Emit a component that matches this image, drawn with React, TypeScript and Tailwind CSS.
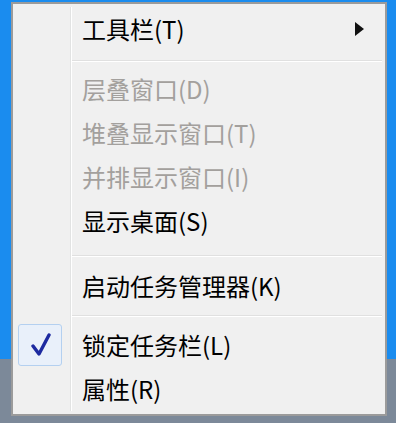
import React from "react";

// ── Menu pieces ──────────────────────────────────────────────────────────────

type Item = {
  label: string;
  disabled?: boolean;
  checked?: boolean;
  submenu?: boolean;
};

function CheckMark() {
  return (
    <svg width="22" height="26" viewBox="0 0 22 26" className="block">
      <path
        d="M4 14 L10 22 L20 3"
        fill="none"
        stroke="#1d2aa0"
        strokeWidth="3.4"
        strokeLinejoin="round"
        strokeLinecap="round"
      />
    </svg>
  );
}

function Gutter({ children }: { children?: React.ReactNode }) {
  return (
    <>
      <div className="w-[54px] shrink-0 flex items-center self-stretch">{children}</div>
      <div className="w-px shrink-0 self-stretch bg-[#e2e3e3]" />
      <div className="w-px shrink-0 self-stretch bg-white" />
    </>
  );
}

function MenuRow({ item }: { item: Item }) {
  return (
    <div className="flex h-[44px] items-stretch">
      <Gutter>
        {item.checked && (
          <div className="ml-[2px] flex h-[42px] w-[44px] items-center justify-center rounded-[3px] border border-[#b4d0f0] bg-[#e9f0fa]">
            <CheckMark />
          </div>
        )}
      </Gutter>
      <div className="flex flex-1 items-center pl-[10px] pr-[18px]">
        <span
          className={
            "text-[24px] leading-none whitespace-nowrap " +
            (item.disabled ? "text-[#a3a09d]" : "text-black")
          }
        >
          {item.label}
        </span>
        {item.submenu && (
          <svg width="9" height="14" viewBox="0 0 9 14" className="ml-auto">
            <path d="M0 0 L9 7 L0 14 Z" fill="#111" />
          </svg>
        )}
      </div>
    </div>
  );
}

function Separator({ height, lineAt }: { height: string; lineAt: string }) {
  return (
    <div className={"flex items-stretch " + height}>
      <Gutter />
      <div className={"flex-1 " + lineAt}>
        <div className="h-px bg-[#e0e0e0]" />
        <div className="h-px bg-white" />
      </div>
    </div>
  );
}

// ── Page ─────────────────────────────────────────────────────────────────────

export default function App() {
  return (
    <div
      className="w-[396px] h-[423px] overflow-hidden pl-[11px] pt-[2px] bg-[linear-gradient(to_bottom,#1a8cef_359px,#7c8999_359px)]"
      style={{ fontFamily: '"Noto Sans CJK SC", "Noto Sans", sans-serif' }}
    >
      <div className="w-[376px] h-[414px] border-2 border-[#9b9b9b] bg-[#f0f0f0] p-[3px] flex flex-col">
        <MenuRow item={{ label: "工具栏(T)", submenu: true }} />
        <Separator height="h-[16px]" lineAt="pt-[9px]" />
        <MenuRow item={{ label: "层叠窗口(D)", disabled: true }} />
        <MenuRow item={{ label: "堆叠显示窗口(T)", disabled: true }} />
        <MenuRow item={{ label: "并排显示窗口(I)", disabled: true }} />
        <MenuRow item={{ label: "显示桌面(S)" }} />
        <Separator height="h-[21px]" lineAt="pt-[12px]" />
        <MenuRow item={{ label: "启动任务管理器(K)" }} />
        <Separator height="h-[15px]" lineAt="pt-[7px]" />
        <MenuRow item={{ label: "锁定任务栏(L)", checked: true }} />
        <MenuRow item={{ label: "属性(R)" }} />
      </div>
    </div>
  );
}
